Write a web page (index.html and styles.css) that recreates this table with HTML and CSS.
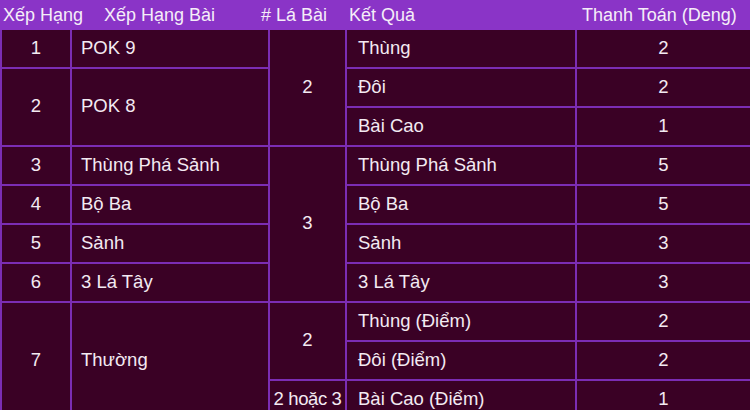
FILE: index.html
```html
<!DOCTYPE html>
<html lang="vi">
<head>
<meta charset="utf-8">
<link rel="stylesheet" href="styles.css">
</head>
<body>
<div class="page">
  <div class="head">
    <div class="h h1">Xếp Hạng</div>
    <div class="h h2">Xếp Hạng Bài</div>
    <div class="h h3"># Lá Bài</div>
    <div class="h h4">Kết Quả</div>
    <div class="h h5">Thanh Toán (Deng)</div>
  </div>
  <table class="grid">
    <colgroup>
      <col class="c1"><col class="c2"><col class="c3"><col class="c4"><col class="c5">
    </colgroup>
    <tbody>
      <tr><td class="mid">1</td><td class="lft">POK 9</td><td class="mid" rowspan="3">2</td><td class="res">Thùng</td><td class="mid">2</td></tr>
      <tr><td class="mid" rowspan="2">2</td><td class="lft" rowspan="2">POK 8</td><td class="res">Đôi</td><td class="mid">2</td></tr>
      <tr><td class="res">Bài Cao</td><td class="mid">1</td></tr>
      <tr><td class="mid">3</td><td class="lft">Thùng Phá Sảnh</td><td class="mid" rowspan="4">3</td><td class="res">Thùng Phá Sảnh</td><td class="mid">5</td></tr>
      <tr><td class="mid">4</td><td class="lft">Bộ Ba</td><td class="res">Bộ Ba</td><td class="mid">5</td></tr>
      <tr><td class="mid">5</td><td class="lft">Sảnh</td><td class="res">Sảnh</td><td class="mid">3</td></tr>
      <tr><td class="mid">6</td><td class="lft">3 Lá Tây</td><td class="res">3 Lá Tây</td><td class="mid">3</td></tr>
      <tr><td class="mid" rowspan="3">7</td><td class="lft" rowspan="3">Thường</td><td class="mid" rowspan="2">2</td><td class="res">Thùng (Điểm)</td><td class="mid">2</td></tr>
      <tr><td class="res">Đôi (Điểm)</td><td class="mid">2</td></tr>
      <tr><td class="mid tight">2 hoặc 3</td><td class="res">Bài Cao (Điểm)</td><td class="mid">1</td></tr>
    </tbody>
  </table>
</div>
</body>
</html>
```

FILE: styles.css
```css
html, body {
  margin: 0;
  padding: 0;
  background: #3a0125;
}
body {
  width: 750px;
  height: 410px;
  overflow: hidden;
  font-family: "Liberation Sans", Arial, sans-serif;
  font-size: 18px;
  color: #f3eaf2;
}
.page {
  width: 750px;
}
.head {
  display: flex;
  height: 30px;
  background: #8a34c7;
  align-items: center;
  white-space: nowrap;
}
.h {
  padding-left: 3px;
  box-sizing: border-box;
  color: #f5edf8;
}
.h1 { width: 101px; }
.h2 { width: 157px; }
.h3 { width: 88px; }
.h4 { width: 233px; }
.h5 { width: 171px; }

.grid {
  width: 750px;
  border-collapse: collapse;
  table-layout: fixed;
  background: #3a0125;
  font-size: 18.5px;
}
.c1 { width: 70px; }
.c2 { width: 198px; }
.c3 { width: 77px; }
.c4 { width: 230px; }
.c5 { width: 175px; }

.grid td {
  border: 2px solid #7b2db4;
  height: 35px;
  padding: 0 0 2px 0;
  vertical-align: middle;
  white-space: nowrap;
}
.grid tr:first-child td {
  border-top: 0;
}
.mid { text-align: center; }
.lft { padding-left: 9px !important; text-align: left; }
.res { padding-left: 11px !important; text-align: left; }
.tight { letter-spacing: -0.4px; }
```
